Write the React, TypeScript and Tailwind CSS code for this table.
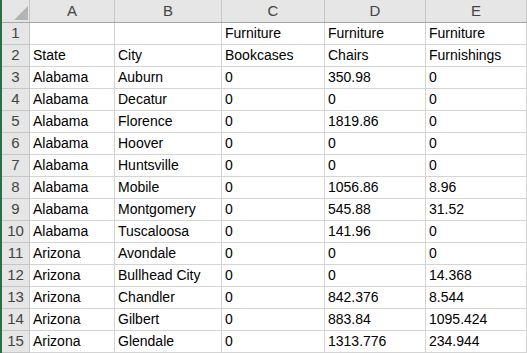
import React from "react";

const cols = [
  { name: "A", w: 85 },
  { name: "B", w: 107 },
  { name: "C", w: 103 },
  { name: "D", w: 101 },
  { name: "E", w: 101 },
];

const rows: string[][] = [
  ["", "", "Furniture", "Furniture", "Furniture"],
  ["State", "City", "Bookcases", "Chairs", "Furnishings"],
  ["Alabama", "Auburn", "0", "350.98", "0"],
  ["Alabama", "Decatur", "0", "0", "0"],
  ["Alabama", "Florence", "0", "1819.86", "0"],
  ["Alabama", "Hoover", "0", "0", "0"],
  ["Alabama", "Huntsville", "0", "0", "0"],
  ["Alabama", "Mobile", "0", "1056.86", "8.96"],
  ["Alabama", "Montgomery", "0", "545.88", "31.52"],
  ["Alabama", "Tuscaloosa", "0", "141.96", "0"],
  ["Arizona", "Avondale", "0", "0", "0"],
  ["Arizona", "Bullhead City", "0", "0", "14.368"],
  ["Arizona", "Chandler", "0", "842.376", "8.544"],
  ["Arizona", "Gilbert", "0", "883.84", "1095.424"],
  ["Arizona", "Glendale", "0", "1313.776", "234.944"],
];

export default function App() {
  return (
    <div
      className="w-[527px] h-[353px] overflow-hidden bg-white border-l-2 border-[#217346] text-black"
      style={{ fontFamily: '"Liberation Sans", Arial, sans-serif' }}
    >
      <div className="flex h-[23px] bg-[#e6e6e6] border-b border-[#a5a5a5]">
        <div className="w-[28px] shrink-0 border-r border-[#c6c6c6] relative">
          <svg className="absolute left-[12px] top-[6px]" width="14" height="14" viewBox="0 0 14 14">
            <polygon points="14,0 14,14 0,14" fill="#b4b4b4" />
          </svg>
        </div>
        {cols.map((c) => (
          <div
            key={c.name}
            style={{ width: c.w }}
            className="shrink-0 border-r border-[#c6c6c6] flex items-center justify-center text-[15px] text-[#444444] pt-[1px]"
          >
            {c.name}
          </div>
        ))}
      </div>
      {rows.map((r, i) => (
        <div key={i} className="flex h-[22px]">
          <div className="w-[28px] shrink-0 bg-[#e6e6e6] border-r border-b border-[#c6c6c6] flex items-center justify-center text-[15px] text-[#444444]">
            {i + 1}
          </div>
          {r.map((v, j) => (
            <div
              key={j}
              style={{ width: cols[j].w }}
              className="shrink-0 border-r border-b border-[#d4d4d4] flex items-end pl-[3px] pb-[2px] text-[14px] leading-[17px] whitespace-nowrap overflow-visible"
            >
              {v}
            </div>
          ))}
        </div>
      ))}
    </div>
  );
}
